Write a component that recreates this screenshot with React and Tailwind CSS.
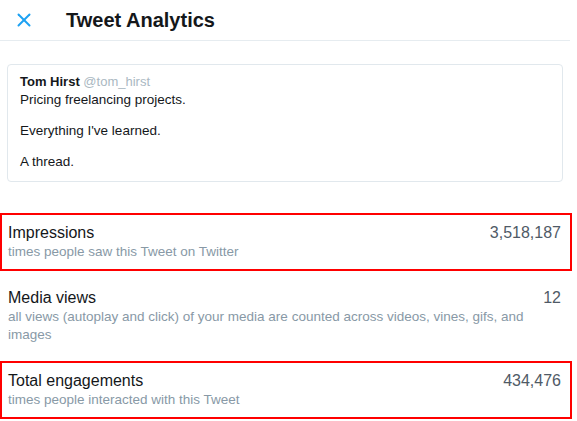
const tweet = {
  name: 'Tom Hirst',
  handle: '@tom_hirst',
  paragraphs: ['Pricing freelancing projects.', "Everything I've learned.", 'A thread.'],
};

const metrics = [
  {
    label: 'Impressions',
    hint: 'times people saw this Tweet on Twitter',
    value: '3,518,187',
    highlight: true,
  },
  {
    label: 'Media views',
    hint: 'all views (autoplay and click) of your media are counted across videos, vines, gifs, and images',
    value: '12',
  },
  {
    label: 'Total engagements',
    hint: 'times people interacted with this Tweet',
    value: '434,476',
    highlight: true,
  },
];

function CloseIcon() {
  return (
    <svg width="14" height="14" viewBox="0 0 14 14" fill="none" stroke="#1da1f2" strokeWidth="2" strokeLinecap="round">
      <path d="M1.5 1.5 L12.5 12.5" />
      <path d="M12.5 1.5 L1.5 12.5" />
    </svg>
  );
}

function MetricRow({ metric }) {
  return (
    <div
      className={`flex items-start gap-4 border-2 pl-[6px] pr-[9px] pt-[8px] pb-[8px] ${
        metric.highlight ? 'border-[#ff0000]' : 'border-transparent'
      }`}
    >
      <div className="flex-1 min-w-0">
        <div className="text-[16px] leading-[20px] text-[#14171a]">{metric.label}</div>
        <div className="text-[13.5px] leading-[18px] text-[#8899a6]">{metric.hint}</div>
      </div>
      <div className="shrink-0 text-[16px] leading-[20px] text-[#4f5a66]">{metric.value}</div>
    </div>
  );
}

export default function App() {
  return (
    <div className="w-[577px] h-[421px] overflow-hidden bg-white font-['Liberation_Sans',Arial,sans-serif]">
      {/* Header */}
      <div className="flex items-center h-[41px] w-[570px] border-b border-[#e6ecf0] pl-[17px] pb-[10px] pt-[9px]">
        <CloseIcon />
        <h1 className="ml-[35px] text-[20px] font-bold leading-[22px] text-[#14171a]">Tweet Analytics</h1>
      </div>

      {/* Tweet */}
      <div className="ml-[7px] mt-[23px] w-[556px] rounded-[4px] border border-[#e1e8ed] px-[12px] pt-[8px] pb-[10px] text-[13.5px] leading-[18px] text-[#14171a]">
        <div className="text-[13px]">
          <span className="font-bold">{tweet.name}</span>{' '}
          <span className="text-[#aab8c2]">{tweet.handle}</span>
        </div>
        {tweet.paragraphs.map((p, i) => (
          <p key={p} className={i > 0 ? 'mt-[13px]' : ''}>
            {p}
          </p>
        ))}
      </div>

      {/* Metrics */}
      <div className="mt-[31px] mr-[5px] flex flex-col gap-[7px]">
        {metrics.map((m) => (
          <MetricRow key={m.label} metric={m} />
        ))}
      </div>
    </div>
  );
}
